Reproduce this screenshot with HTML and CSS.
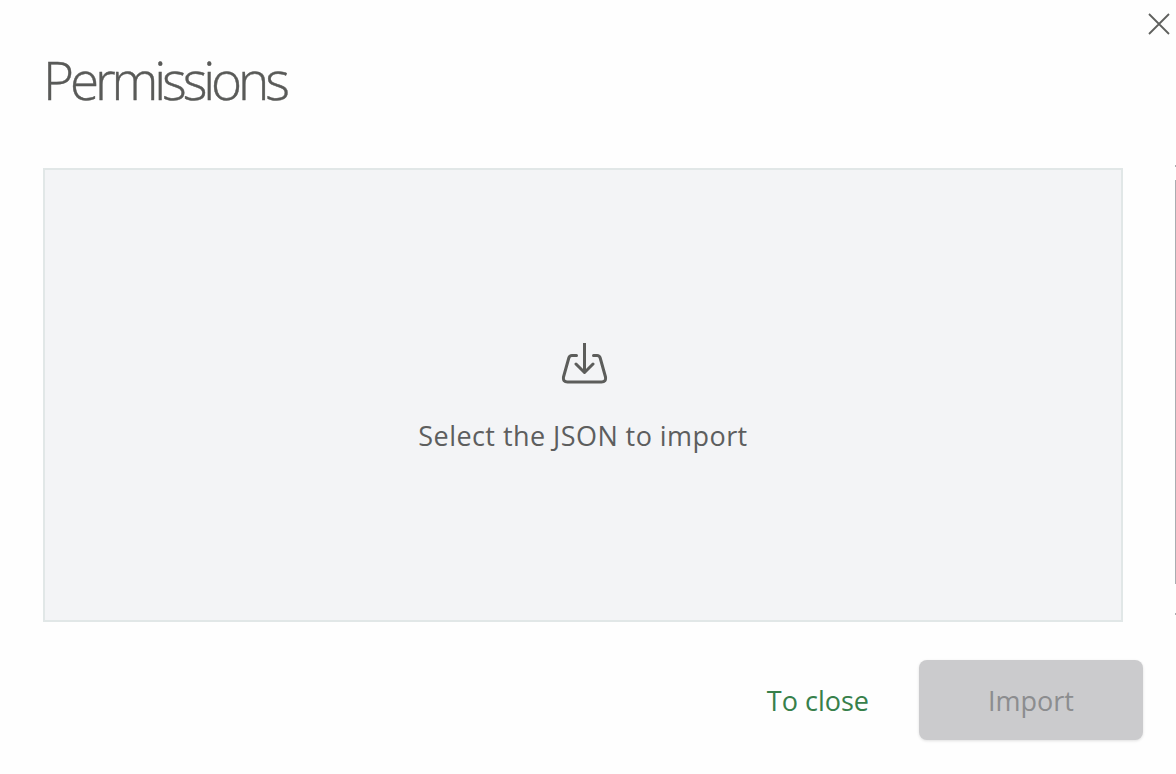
FILE: index.html
```html
<!DOCTYPE html>
<html lang="en">
<head>
<meta charset="utf-8">
<title>Permissions</title>
<link rel="stylesheet" href="styles.css">
</head>
<body>
<main class="modal">
  <button class="close" aria-label="Close">
    <svg width="22" height="22" viewBox="0 0 22 22"><path d="M1 1L21 21M21 1L1 21" fill="none" stroke="#5f605e" stroke-width="1.8"/></svg>
  </button>
  <span class="sliver sliver-top"></span>
  <span class="sliver sliver-dot"></span>
  <span class="sliver sliver-bottom"></span>
  <h1 class="title">Permissions</h1>
  <section class="drop">
    <svg class="drop-icon" width="46" height="44" viewBox="0 0 46 44"><path d="M23 0V29M14.500 21L23 29.500L31.500 21M15 12.500H10.500Q8 12.500 7.300 15L2 34Q1.300 39 6 39H40Q44.700 39 44 34L38.700 15Q38 12.500 35.500 12.500H32" fill="none" stroke="#5c5d5b" stroke-width="3" stroke-linecap="round" stroke-linejoin="round"/></svg>
    <p class="drop-text">Select the JSON to import</p>
  </section>
  <footer class="actions">
    <button class="link">To close</button>
    <button class="primary" disabled>Import</button>
  </footer>
</main>
</body>
</html>
```
FILE: styles.css
```css
* { box-sizing: border-box; }
html, body { margin: 0; height: 100%; }
body {
  background: #fefefe;
  font-family: "Open Sans", "Noto Sans", sans-serif;
  overflow: hidden;
}
.modal {
  position: relative;
  height: 774px;
  display: flex;
  flex-direction: column;
  padding: 0 33px 34px 43px;
}
.close {
  position: absolute;
  top: 13px;
  right: 6px;
  width: 22px;
  height: 22px;
  padding: 0;
  border: 0;
  background: none;
}
.close svg { display: block; }
.sliver {
  position: absolute;
  right: 0;
  width: 1px;
  background: #a9adb1;
}
.sliver-top { top: 165px; height: 2px; }
.sliver-dot { top: 613px; height: 2px; }
.sliver-bottom { top: 180px; height: 404px; }
.title {
  margin: 46px 0 0;
  height: 122px;
  font-size: 53px;
  font-weight: 300;
  line-height: 68px;
  letter-spacing: -4.1px;
  color: #595a58;
  -webkit-text-stroke: 0.4px #595a58;
}
.drop {
  width: 1080px;
  height: 454px;
  display: flex;
  flex-direction: column;
  align-items: center;
  background: #f3f4f6;
  border: 2px solid #e1e7e7;
  padding-top: 173px;
}
.drop-icon { display: block; transform: translateX(1.500px); }
.drop-text {
  margin: 31px 0 0;
  font-size: 27px;
  line-height: 36px;
  color: #5d5e5e;
  letter-spacing: 0.44px;
}
.actions {
  flex: 1;
  display: flex;
  justify-content: flex-end;
  align-items: flex-end;
  gap: 50px;
}
.link {
  border: 0;
  background: none;
  padding: 0;
  height: 80px;
  font: inherit;
  font-size: 27px;
  color: #37804a;
}
.primary {
  width: 224px;
  height: 80px;
  border: 0;
  border-radius: 8px;
  background: #cbcbcd;
  color: #8c8d8f;
  font: inherit;
  font-size: 27px;
  box-shadow: 0 1px 3px rgba(0,0,0,.12);
}
```
